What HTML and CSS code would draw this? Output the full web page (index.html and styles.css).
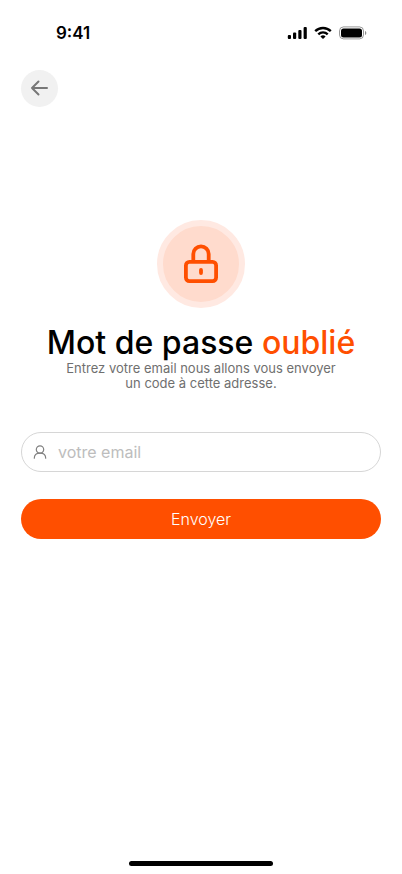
FILE: index.html
```html
<!DOCTYPE html>
<html lang="fr">
<head>
<meta charset="utf-8">
<meta name="viewport" content="width=device-width, initial-scale=1">
<title>Mot de passe oublié</title>
<link rel="stylesheet" href="styles.css">
</head>
<body>
<div class="screen">
  <header class="status">
    <time class="clock">9:41</time>
    <div class="indicators">
      <svg width="20" height="14" viewBox="0 0 20 14" aria-hidden="true">
        <rect x="0.8" y="9" width="3.2" height="4" rx="1"/>
        <rect x="6" y="6.5" width="3.2" height="6.5" rx="1"/>
        <rect x="11.300" y="4" width="3.2" height="9" rx="1"/>
        <rect x="16.600" y="1" width="3.2" height="12" rx="1"/>
      </svg>
      <svg width="18" height="14" viewBox="0 0 18 14" fill="none" stroke="#000" stroke-width="2.4" aria-hidden="true">
        <path d="M1.2 5.1a11.2 11.2 0 0 1 15.6 0"/>
        <path d="M4.3 8.3a6.8 6.8 0 0 1 9.4 0"/>
        <path d="M9 13 6.4 10.4a3.8 3.8 0 0 1 5.2 0Z" fill="#000" stroke="none"/>
      </svg>
      <svg width="28" height="14" viewBox="0 0 28 14" aria-hidden="true">
        <rect x="0.5" y="0.9" width="24" height="12" rx="4" fill="none" stroke="#000" stroke-opacity="0.4"/>
        <rect x="2" y="2.4" width="21" height="9" rx="2.5"/>
        <path d="M26 5v4c.8-.3 1.300-1.100 1.300-2S26.800 5.300 26 5Z" fill-opacity="0.45"/>
      </svg>
    </div>
  </header>

  <nav class="topbar">
    <button class="back" type="button" aria-label="Retour">
      <svg width="19" height="17" viewBox="0 0 19 17" fill="none" stroke="currentColor" stroke-width="2" stroke-linecap="round" stroke-linejoin="round" aria-hidden="true">
        <path d="M17 8H2M8.500 1.500 2 8l6.500 6.500"/>
      </svg>
    </button>
  </nav>

  <main class="content">
    <div class="badge">
      <svg width="36" height="40" viewBox="0 0 36 40" fill="none" stroke="currentColor" stroke-width="3.800" aria-hidden="true">
        <rect x="2.900" y="17.900" width="30.200" height="19.200" rx="3.500"/>
        <path d="M10.300 17.500V10a7.700 7.700 0 0 1 15.400 0V17.500"/>
        <path d="M18 26v3" stroke-linecap="round"/>
      </svg>
    </div>
    <h1 class="title">Mot de passe <span class="accent">oublié</span></h1>
    <p class="hint">Entrez votre email nous allons vous envoyer un code à cette adresse.</p>

    <form class="form">
      <label class="field">
        <svg width="14" height="14" viewBox="0 0 14 14" fill="none" stroke="currentColor" stroke-width="1.200" stroke-linecap="round" aria-hidden="true">
          <circle cx="7" cy="4.500" r="3.700"/>
          <path d="M1.300 13.200C1.300 10 3.800 8.200 7 8.200s5.700 1.800 5.700 5"/>
        </svg>
        <input class="input" type="email" placeholder="votre email" aria-label="votre email">
      </label>
      <button class="submit" type="submit">Envoyer</button>
    </form>
  </main>

  <div class="home"></div>
</div>
</body>
</html>
```
FILE: styles.css
```css
* {
  box-sizing: border-box;
}

body {
  margin: 0;
  background: #fff;
  color: #000;
  font-family: Inter, "Liberation Sans", sans-serif;
}

button,
input {
  font: inherit;
}

svg {
  display: block;
  flex: none;
}

.screen {
  display: flex;
  flex-direction: column;
  min-height: 100vh;
}

.status {
  display: flex;
  align-items: center;
  justify-content: space-between;
  padding: 22px 35px 0 56px;
}

.clock {
  font-size: 17px;
  font-weight: 600;
  line-height: 22px;
}

.indicators {
  display: flex;
  align-items: center;
  gap: 7px;
}

.topbar {
  padding: 26px 21px 0;
}

.back {
  display: flex;
  align-items: center;
  justify-content: center;
  width: 37px;
  height: 37px;
  padding: 0;
  border: 0;
  border-radius: 50%;
  background: #f1f1f1;
  color: #777;
}

.content {
  display: flex;
  flex: 1;
  flex-direction: column;
  align-items: center;
  padding: 113px 21px 0;
}

.badge {
  display: flex;
  align-items: center;
  justify-content: center;
  width: 88px;
  height: 88px;
  border: 6px solid #ffe9e2;
  border-radius: 50%;
  background: #ffdbcd;
  color: #ff4f00;
}

.title {
  margin: 17px 0 0;
  font-size: 32px;
  font-weight: 500;
  line-height: 36px;
  text-align: center;
}

.accent {
  color: #ff4f00;
}

.hint {
  max-width: 280px;
  margin: 0;
  color: #6f6f6f;
  font-size: 13px;
  line-height: 15px;
  text-align: center;
}

.form {
  display: flex;
  flex-direction: column;
  gap: 27px;
  align-self: stretch;
  margin-top: 41px;
}

.field {
  display: flex;
  align-items: center;
  gap: 11px;
  height: 40px;
  padding: 0 11px;
  border: 1px solid #d6d6d6;
  border-radius: 20px;
  color: #808080;
}

.input {
  flex: 1;
  min-width: 0;
  padding: 0;
  border: 0;
  outline: 0;
  background: none;
  color: #000;
  font-size: 16px;
}

.input::placeholder {
  color: #bdbdbd;
  opacity: 1;
}

.submit {
  height: 40px;
  padding: 0;
  border: 0;
  border-radius: 20px;
  background: #ff4f00;
  color: #fff;
  font-size: 16px;
  font-weight: 300;
}

.home {
  align-self: center;
  width: 144px;
  height: 5px;
  margin-bottom: 8px;
  border-radius: 3px;
  background: #000;
}
```
